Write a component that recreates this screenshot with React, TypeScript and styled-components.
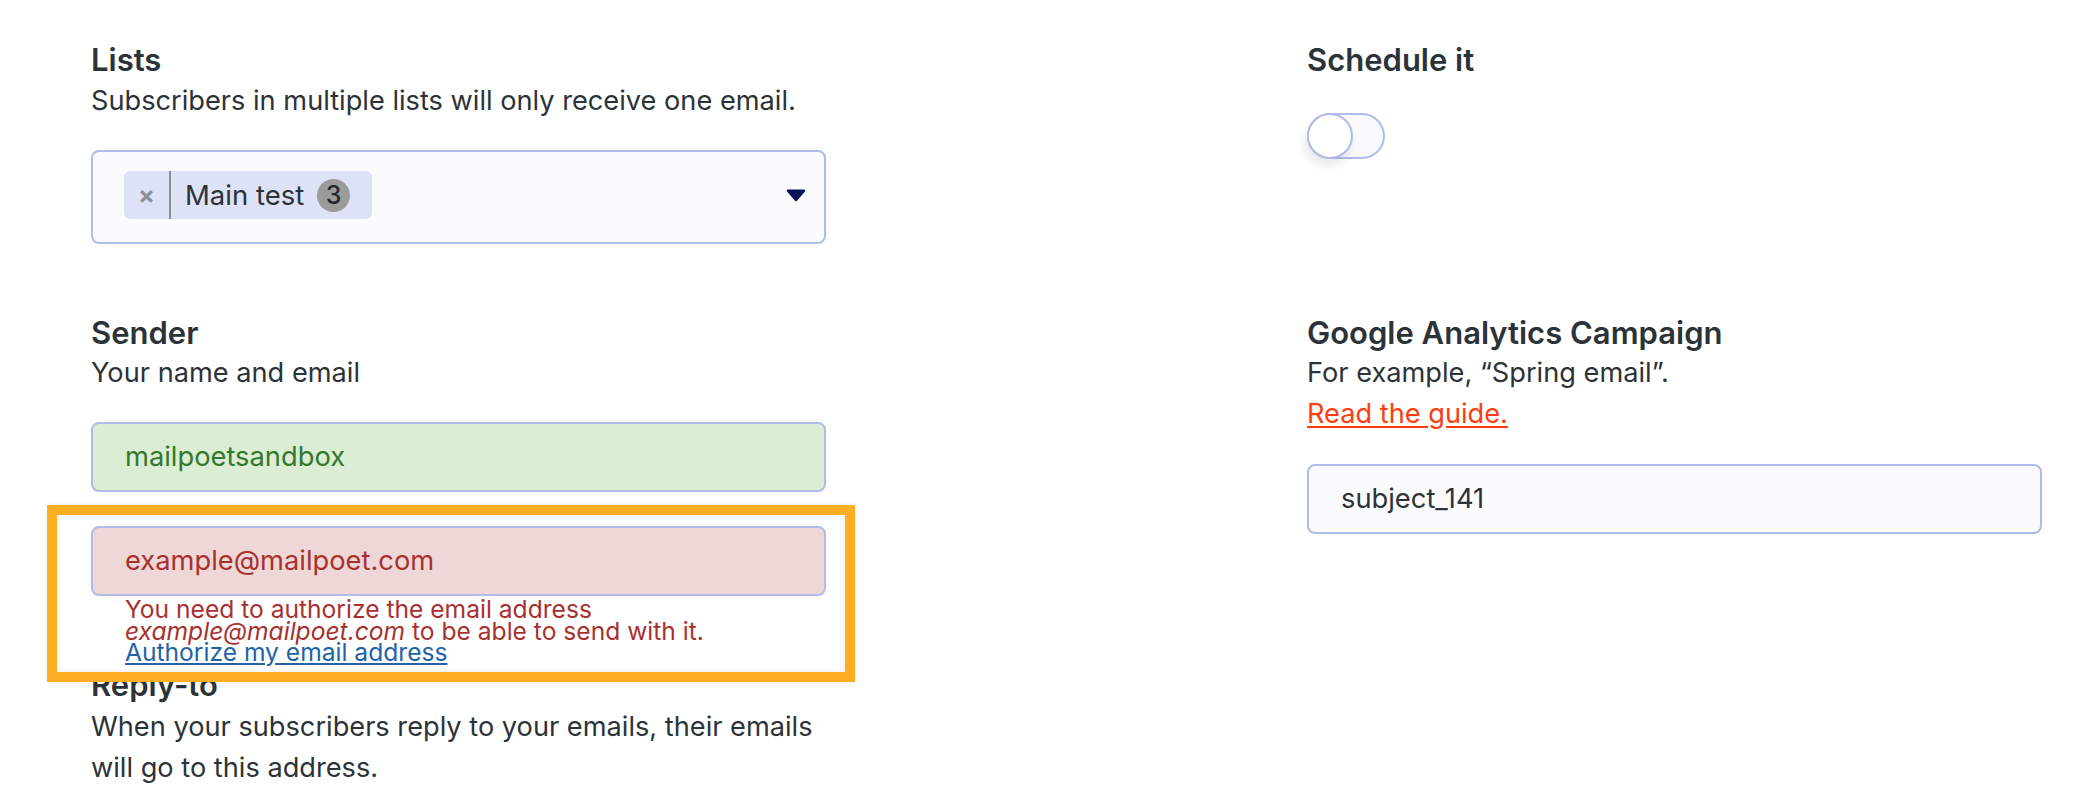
import React from "react";
import styled, { createGlobalStyle } from "styled-components";

const GlobalStyle = createGlobalStyle`
  html, body {
    margin: 0;
    background: #ffffff;
  }
  body {
    font-family: Inter, "Noto Sans", sans-serif;
    color: #2c3338;
  }
`;

const Page = styled.div`
  display: grid;
  grid-template-columns: 735px 735px;
  column-gap: 481px;
  row-gap: 71px;
  padding: 42px 0 0 91px;
  align-items: start;
`;

const Section = styled.section`
  display: flex;
  flex-direction: column;
`;

const Heading = styled.h2`
  margin: 0;
  font-size: 31px;
  line-height: 36px;
  font-weight: 600;
  color: #2c3338;
`;

const Description = styled.p<{ $gap?: number }>`
  margin: ${(p) => p.$gap ?? 1}px 0 0;
  font-size: 27.2px;
  line-height: 41px;
  color: #2c3338;
`;

const GuideLink = styled.a`
  font-size: 27.2px;
  line-height: 41px;
  color: #ff3c0d;
  text-decoration: underline;
  text-underline-offset: 3px;
  width: max-content;
`;

const SelectBox = styled.div`
  margin-top: 29px;
  height: 94px;
  box-sizing: border-box;
  border: 2px solid #b1bbe8;
  border-radius: 8px;
  background: #fbfbfe;
  display: flex;
  align-items: center;
  justify-content: space-between;
  padding: 0 18px 4px 31px;
`;

const Tag = styled.div`
  display: flex;
  align-items: stretch;
  height: 48px;
  border-radius: 6px;
  background: #dde2f6;
`;

const TagRemove = styled.span`
  width: 45px;
  display: flex;
  align-items: center;
  justify-content: center;
  border-right: 2px solid #8c8f94;
  color: #8c8f94;
  font-size: 25px;
  font-weight: 700;
`;

const TagLabel = styled.span`
  display: flex;
  align-items: center;
  gap: 13px;
  padding: 0 22px 0 14px;
  font-size: 27.5px;
  color: #2c3338;
`;

const Count = styled.span`
  width: 33px;
  height: 33px;
  border-radius: 50%;
  background: #9b9b9b;
  display: flex;
  align-items: center;
  justify-content: center;
  font-size: 25px;
  font-weight: 500;
  color: #23282d;
`;

const Toggle = styled.div`
  margin-top: 35px;
  width: 78px;
  height: 46px;
  box-sizing: border-box;
  border: 2px solid #b1bbe9;
  border-radius: 23px;
  background: #f8f8fd;
  display: flex;
`;

const Knob = styled.span`
  width: 46px;
  height: 46px;
  margin: -2px;
  box-sizing: border-box;
  border: 2px solid #b1bbe9;
  border-radius: 50%;
  background: #ffffff;
  box-shadow: -3px 7px 10px rgba(0, 0, 0, 0.09);
`;

type Tone = "neutral" | "valid" | "invalid";

const tones: Record<Tone, { bg: string; fg: string }> = {
  neutral: { bg: "#fbfbfe", fg: "#2c3338" },
  valid: { bg: "#dbeed3", fg: "#33782f" },
  invalid: { bg: "#efd7d8", fg: "#a8312f" },
};

const Input = styled.div<{ $tone: Tone; $gap?: number }>`
  margin-top: ${(p) => p.$gap ?? 29}px;
  height: 70px;
  box-sizing: border-box;
  border: 2px solid #b1bbe8;
  border-radius: 8px;
  background: ${(p) => tones[p.$tone].bg};
  color: ${(p) => tones[p.$tone].fg};
  display: flex;
  align-items: center;
  padding: 0 32px 2px;
  font-size: 27.3px;
`;

const ErrorField = styled.div`
  position: relative;
  margin-top: 34px;
`;

// orange annotation frame drawn over the invalid field
const Highlight = styled.div`
  position: absolute;
  left: -44px;
  top: -21px;
  right: -29px;
  bottom: -18px;
  border: 10px solid #fdae23;
  box-shadow: 0 0 6px rgba(0, 0, 0, 0.08), inset 0 0 6px rgba(0, 0, 0, 0.08);
  pointer-events: none;
`;

const ErrorText = styled.div`
  margin-top: 3px;
  padding-left: 34px;
  font-size: 24.6px;
  line-height: 21.5px;
  color: #a8312f;

  em {
    font-style: italic;
  }

  a {
    color: #2263a8;
    text-decoration: underline;
    text-underline-offset: 2px;
  }
`;

const ReplyHeading = styled(Heading)`
  margin-top: 3px;
`;

const Arrow = () => (
  <svg width="20" height="14" viewBox="0 0 20 14">
    <path
      d="M2 1.5 H18 a1.2 1.2 0 0 1 1 1.9 L11.2 12.6 a1.5 1.5 0 0 1 -2.4 0 L1 3.4 a1.2 1.2 0 0 1 1 -1.9 Z"
      fill="#0d1257"
    />
  </svg>
);

export default function App() {
  return (
    <>
      <GlobalStyle />
      <Page>
        <Section>
          <Heading>Lists</Heading>
          <Description $gap={2}>Subscribers in multiple lists will only receive one email.</Description>
          <SelectBox>
            <Tag>
              <TagRemove>×</TagRemove>
              <TagLabel>
                Main test
                <Count>3</Count>
              </TagLabel>
            </Tag>
            <Arrow />
          </SelectBox>
        </Section>

        <Section>
          <Heading>Schedule it</Heading>
          <Toggle>
            <Knob />
          </Toggle>
        </Section>

        <Section>
          <Heading>Sender</Heading>
          <Description>Your name and email</Description>
          <Input $tone="valid">mailpoetsandbox</Input>
          <ErrorField>
            <Highlight />
            <Input $tone="invalid" $gap={0}>
              example@mailpoet.com
            </Input>
            <ErrorText>
              You need to authorize the email address
              <br />
              <em>example@mailpoet.com</em> to be able to send with it.
              <br />
              <a href="#authorize">Authorize my email address</a>
            </ErrorText>
          </ErrorField>
          <ReplyHeading>Reply-to</ReplyHeading>
          <Description $gap={3}>
            When your subscribers reply to your emails, their emails
            <br />
            will go to this address.
          </Description>
        </Section>

        <Section>
          <Heading>Google Analytics Campaign</Heading>
          <Description>For example, “Spring email”.</Description>
          <GuideLink href="#guide">Read the guide.</GuideLink>
          <Input $tone="neutral" $gap={30}>
            subject_141
          </Input>
        </Section>
      </Page>
    </>
  );
}
